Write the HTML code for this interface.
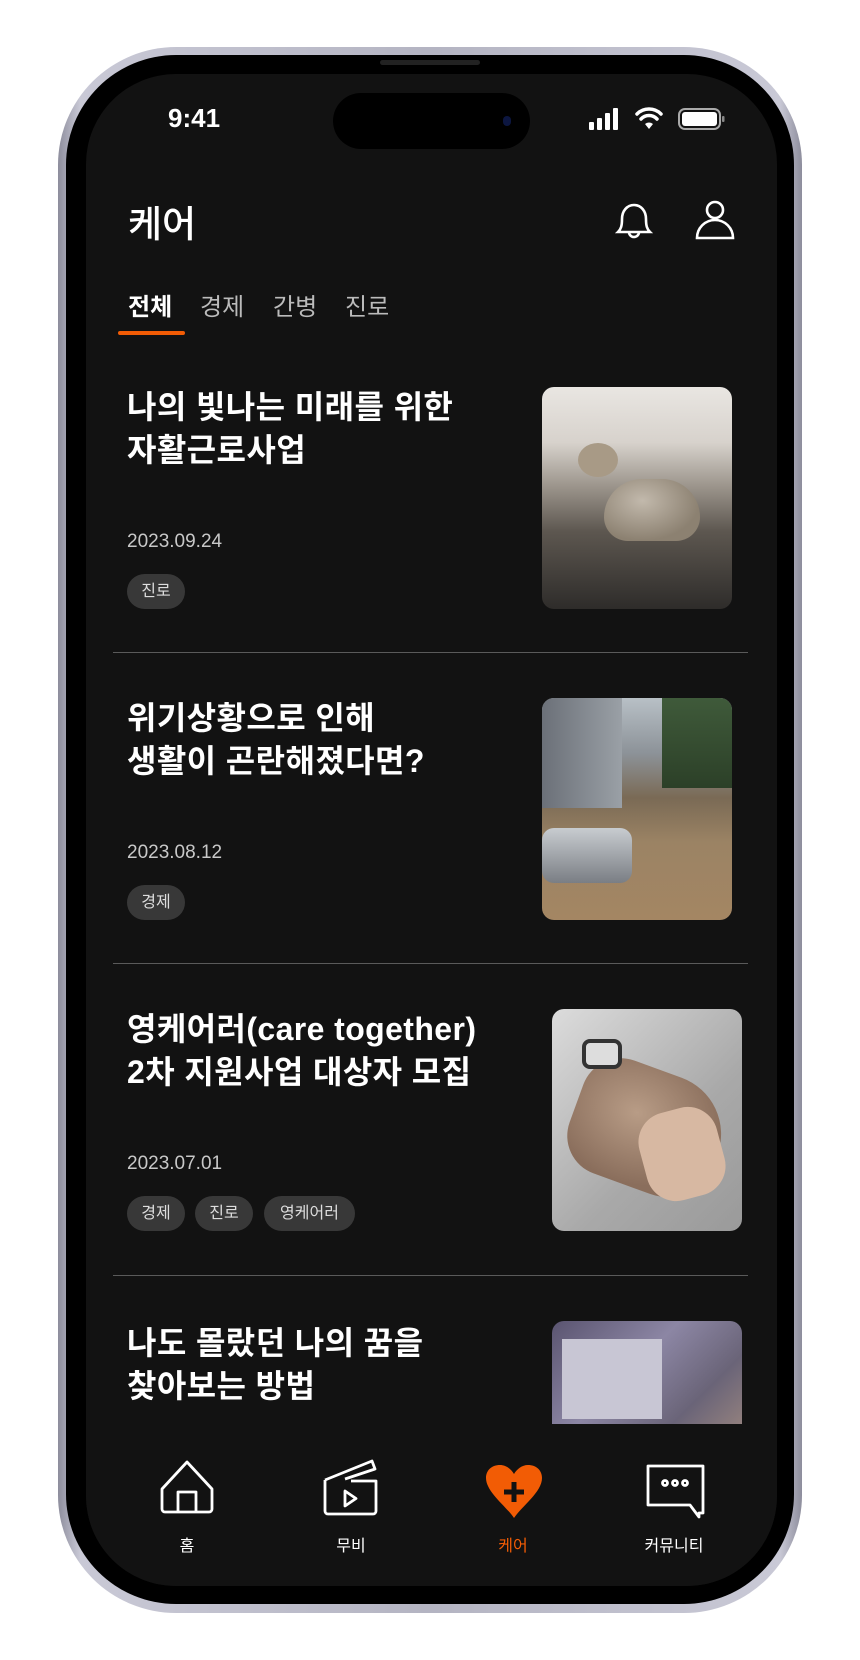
<!DOCTYPE html>
<html><head><meta charset="utf-8"><style>
*{margin:0;padding:0;box-sizing:border-box}
body{width:860px;height:1660px;background:#fff;position:relative;overflow:hidden;font-family:"Liberation Sans","Noto Sans CJK KR",sans-serif;color:#fff}
.abs{position:absolute}
.frame{left:58px;top:47px;width:744px;height:1566px;border-radius:118px;background:linear-gradient(90deg,#8d8d9c,#c9c9d6 3%,#b4b4c2 50%,#c9c9d6 97%,#8d8d9c);}
.bezel{left:66px;top:55px;width:728px;height:1549px;border-radius:110px;background:#000}
.screen{left:86px;top:74px;width:691px;height:1512px;border-radius:90px;background:#121212;overflow:hidden}
.t{position:absolute;white-space:nowrap}
.title{font-size:32px;font-weight:700;line-height:43px;left:41px;letter-spacing:0.4px}
.date{font-size:19px;color:#c8c8c8;left:41px}
.tag{position:absolute;height:35px;line-height:35px;border-radius:18px;background:#383838;font-size:16px;color:#ddd;text-align:center}
.img{position:absolute;border-radius:12px;overflow:hidden}
.div{position:absolute;left:27px;width:635px;height:1px;background:#5a5a5a}
.nav{font-size:16px;position:absolute;top:1458px;text-align:center;width:80px}
</style></head><body>
<div class="abs frame"></div>
<div class="abs bezel"></div>
<div class="abs" style="left:380px;top:60px;width:100px;height:5px;border-radius:3px;background:#222"></div>
<div class="abs screen">
  <div class="t" style="left:82px;top:29px;font-size:26px;font-weight:700">9:41</div>
  <div class="abs" style="left:247px;top:19px;width:197px;height:56px;border-radius:28px;background:#000"></div>
  <div class="abs" style="left:417px;top:42px;width:8px;height:10px;border-radius:5px;background:#0c1640"></div>
  <svg class="abs" style="left:500px;top:32px" width="145" height="26" viewBox="0 0 145 26">
    <rect x="3" y="16" width="5" height="8" rx="1" fill="#fff"/><rect x="11" y="12" width="5" height="12" rx="1" fill="#fff"/><rect x="19" y="7" width="5" height="17" rx="1" fill="#fff"/><rect x="27" y="2" width="5" height="22" rx="1" fill="#fff"/>
    <path d="M51 8a17 17 0 0 1 24 0M55 13a11 11 0 0 1 16 0" stroke="#fff" stroke-width="3.5" fill="none" stroke-linecap="round"/><path d="M59 18l4 5 4-5a6 6 0 0 0-8 0z" fill="#fff"/>
    <rect x="93" y="3" width="41" height="20" rx="6" fill="none" stroke="#aaa" stroke-width="2"/><rect x="96" y="6" width="35" height="14" rx="3" fill="#fff"/><rect x="136" y="10" width="2.5" height="6" rx="1" fill="#888"/>
  </svg>
  <div class="t" style="left:42px;top:120px;font-size:37px;font-weight:500">케어</div>
  <svg class="abs" style="left:526px;top:124px" width="44" height="44" viewBox="0 0 44 44" fill="none" stroke="#fff" stroke-width="2.6">
    <path d="M6 34h32c-3-3-4-6-4-13 0-8-5-14-12-14S10 13 10 21c0 7-1 10-4 13z"/><path d="M17 34a5 5 0 0 0 10 0"/></svg>
  <svg class="abs" style="left:608px;top:124px" width="42" height="44" viewBox="0 0 42 44" fill="none" stroke="#fff" stroke-width="2.6">
    <circle cx="21" cy="12" r="8"/><path d="M3 40c0-10 8-18 18-18s18 8 18 18z"/></svg>
  <div class="t" style="left:42px;top:213px;font-size:24px;font-weight:700">전체</div>
  <div class="t" style="left:114px;top:213px;font-size:24px;color:#bbb">경제</div>
  <div class="t" style="left:187px;top:213px;font-size:24px;color:#bbb">간병</div>
  <div class="t" style="left:259px;top:213px;font-size:24px;color:#bbb">진로</div>
  <div class="abs" style="left:32px;top:257px;width:67px;height:4px;border-radius:2px;background:#f25c05"></div>

  <!-- item1 -->
  <div class="t title" style="top:312px">나의 빛나는 미래를 위한<br>자활근로사업</div>
  <div class="t date" style="top:457px">2023.09.24</div>
  <div class="tag" style="left:41px;top:500px;width:58px">진로</div>
  <div class="img" style="left:456px;top:313px;width:190px;height:222px;background:linear-gradient(180deg,#e9e6e2 0%,#d7d2cc 25%,#9b948b 45%,#5d5750 65%,#2e2c2a 100%)">
    <div class="abs" style="left:62px;top:92px;width:96px;height:62px;border-radius:48px 48px 30px 30px;background:radial-gradient(ellipse at 40% 35%,#c2b9ac,#8c8171 70%)"></div>
    <div class="abs" style="left:36px;top:56px;width:40px;height:34px;border-radius:50%;background:#a89a86"></div>
  </div>
  <div class="div" style="top:578px"></div>

  <!-- item2 -->
  <div class="t title" style="top:623px">위기상황으로 인해<br>생활이 곤란해졌다면?</div>
  <div class="t date" style="top:768px">2023.08.12</div>
  <div class="tag" style="left:41px;top:811px;width:58px">경제</div>
  <div class="img" style="left:456px;top:624px;width:190px;height:222px;background:linear-gradient(180deg,#b8c0c6 0%,#8c9298 25%,#7a6a55 45%,#9b8364 65%,#a48663 100%)">
    <div class="abs" style="left:0;top:0;width:80px;height:110px;background:linear-gradient(90deg,#6b7078,#9aa0a6)"></div>
    <div class="abs" style="left:120px;top:0;width:70px;height:90px;background:linear-gradient(180deg,#3f5a3a,#2c4028)"></div>
    <div class="abs" style="left:0;top:130px;width:90px;height:55px;border-radius:12px;background:linear-gradient(180deg,#c8ccd0,#7a7e84)"></div>
  </div>
  <div class="div" style="top:889px"></div>

  <!-- item3 -->
  <div class="t title" style="top:934px">영케어러(care together)<br>2차 지원사업 대상자 모집</div>
  <div class="t date" style="top:1079px">2023.07.01</div>
  <div class="tag" style="left:41px;top:1122px;width:58px">경제</div>
  <div class="tag" style="left:109px;top:1122px;width:58px">진로</div>
  <div class="tag" style="left:178px;top:1122px;width:91px">영케어러</div>
  <div class="img" style="left:466px;top:935px;width:190px;height:222px;background:linear-gradient(135deg,#dcdcdc,#a9a9a9 60%,#9a9a9a)">
    <div class="abs" style="left:20px;top:60px;width:150px;height:120px;border-radius:40px 60px 50px 40px;background:radial-gradient(ellipse at 40% 40%,#b89c86,#8a6e5c 70%);transform:rotate(20deg)"></div>
    <div class="abs" style="left:90px;top:100px;width:80px;height:90px;border-radius:30px;background:#d7b8a2;transform:rotate(-15deg)"></div>
    <div class="abs" style="left:30px;top:30px;width:40px;height:30px;border-radius:8px;background:#ddd;border:4px solid #333"></div>
  </div>
  <div class="div" style="top:1201px"></div>

  <!-- item4 -->
  <div class="t title" style="top:1248px">나도 몰랐던 나의 꿈을<br>찾아보는 방법</div>
  <div class="img" style="left:466px;top:1247px;width:190px;height:130px;border-radius:12px 12px 0 0;background:linear-gradient(135deg,#5a5470,#8c86a4 40%,#6a6478 70%,#a08a80)">
    <div class="abs" style="left:10px;top:18px;width:100px;height:80px;background:#c8c6d4"></div>
  </div>
  <div class="abs" style="left:0;top:1350px;width:691px;height:170px;background:#121212"></div>

  <!-- nav -->
  <svg class="abs" style="left:72px;top:1385px" width="58" height="56" viewBox="0 0 58 56" fill="none" stroke="#fff" stroke-width="2.8" stroke-linejoin="round">
    <path d="M29 3L4 30v20a3 3 0 0 0 3 3h44a3 3 0 0 0 3-3V30z"/><path d="M20 53V33h18v20"/></svg>
  <svg class="abs" style="left:235px;top:1385px" width="60" height="58" viewBox="0 0 60 58" fill="none" stroke="#fff" stroke-width="2.8" stroke-linejoin="round">
    <path d="M4 21l47-19 3 8-30 10"/><path d="M4 21v31a3 3 0 0 0 3 3h45a3 3 0 0 0 3-3V22H30"/><path d="M24 32v15l11-7.5z"/></svg>
  <svg class="abs" style="left:398px;top:1390px" width="60" height="56" viewBox="0 0 60 56">
    <path d="M30 54C22 42 2 28 2 14 2 6 8 1 16 1c6 0 11 4 14 9 3-5 8-9 14-9 8 0 14 5 14 13 0 14-20 28-28 40z" fill="#f25c05"/>
    <path d="M30 18v20M20 28h20" stroke="#121212" stroke-width="5"/></svg>
  <svg class="abs" style="left:559px;top:1389px" width="62" height="56" viewBox="0 0 62 56" fill="none" stroke="#fff" stroke-width="2.8" stroke-linejoin="round">
    <path d="M3 3h55v47h-4v4l-9-12H3z" /><circle cx="20" cy="20" r="2.5"/><circle cx="30" cy="20" r="2.5"/><circle cx="40" cy="20" r="2.5"/></svg>
  <div class="nav" style="left:61px">홈</div>
  <div class="nav" style="left:225px">무비</div>
  <div class="nav" style="left:387px;color:#f25c05">케어</div>
  <div class="nav" style="left:548px">커뮤니티</div>
</div>
</body></html>
